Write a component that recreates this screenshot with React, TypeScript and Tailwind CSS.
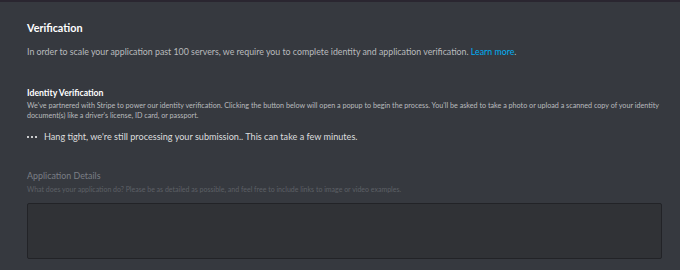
import React from 'react';

const App: React.FC = () => {
    return (
        <div className="w-[680px] h-[270px] overflow-hidden bg-[#36393f] border-t-2 border-[#2a2630] font-['Lato',sans-serif]">
            <div className="px-[27px] pt-[19px]">
                <h2 className="text-[10.8px] leading-[14px] font-bold text-white">Verification</h2>
                <p className="mt-[11px] text-[8.8px] leading-[12px] text-[#b9bbbe]">
                    In order to scale your application past 100 servers, we require you to complete identity and application verification.{' '}
                    <span className="text-[#00b0f4]">Learn more</span>.
                </p>

                <h3 className="mt-[30px] text-[8.7px] leading-[10px] font-bold text-white">Identity Verification</h3>
                <p className="mt-[3px] w-[632px] text-[7.2px] leading-[10px] text-[#b9bbbe]">
                    We've partnered with Stripe to power our identity verification. Clicking the button below will open a popup to begin the process. You'll be asked to take a photo or upload a scanned copy of your identity document(s) like a driver's license, ID card, or passport.
                </p>

                <div className="mt-[10px] flex items-center gap-[7px]">
                    <div className="flex gap-[2px]">
                        <span className="w-[2px] h-[2px] rounded-full bg-white" />
                        <span className="w-[2px] h-[2px] rounded-full bg-white" />
                        <span className="w-[2px] h-[2px] rounded-full bg-white" />
                    </div>
                    <span className="text-[9.1px] leading-[12px] text-[#dcddde]">Hang tight, we're still processing your submission.. This can take a few minutes.</span>
                </div>

                <h3 className="mt-[27px] text-[8.9px] leading-[12px] text-[#7a7e85]">Application Details</h3>
                <p className="mt-[2px] text-[7px] leading-[10px] text-[#5d6066]">
                    What does your application do? Please be as detailed as possible, and feel free to include links to image or video examples.
                </p>
                <div className="mt-[9px] w-[635px] h-[56px] bg-[#303236] border border-[#222327] rounded-[2px]" />
            </div>
        </div>
    );
};

export default App;
